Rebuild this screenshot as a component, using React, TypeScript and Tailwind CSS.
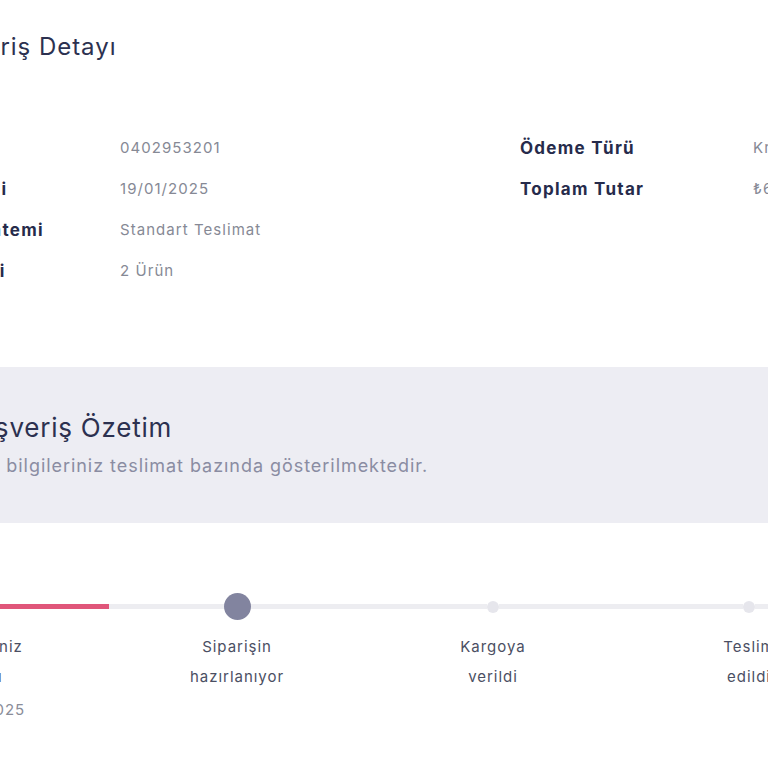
import React from "react";

const font = { fontFamily: "Inter, 'Noto Sans', sans-serif" };

function DetailRow({ label, value, lw }: { label: string; value: string; lw: string }) {
  return (
    <div className="flex h-[41px] items-center">
      <div className={`${lw} shrink-0 whitespace-nowrap text-[17px] font-bold tracking-[0.075em] text-[#262b4b]`}>{label}</div>
      <div className="whitespace-nowrap text-[15px] tracking-[0.07em] text-[#868995]">{value}</div>
    </div>
  );
}

type Step = { lines: string[]; date?: string; state: "done" | "active" | "todo"; first?: boolean; last?: boolean };

const steps: Step[] = [
  { lines: ["Siparişiniz", "alındı"], date: "19/01/2025", state: "done", first: true },
  { lines: ["Siparişin", "hazırlanıyor"], state: "active" },
  { lines: ["Kargoya", "verildi"], state: "todo" },
  { lines: ["Teslim", "edildi"], state: "todo", last: true },
];

function StepCol({ step }: { step: Step }) {
  const leftColor = step.first ? "bg-transparent" : "bg-[#ededf1]";
  const rightColor = step.last ? "bg-[#ededf1]" : step.state === "done" ? "bg-[#e0567a]" : "bg-[#ededf1]";
  return (
    <div className="flex w-[256px] shrink-0 flex-col items-center">
      <div className="flex h-[27px] w-full items-center">
        <div className={`h-[5px] flex-1 ${leftColor}`} />
        {step.state === "active" ? (
          <div className="h-[27px] w-[27px] rounded-full bg-[#82849f]" />
        ) : step.state === "done" ? (
          <div className="h-[12px] w-[12px] rounded-full bg-[#e0567a]" />
        ) : (
          <div className="h-[12px] w-[12px] rounded-full bg-[#e6e6ec]" />
        )}
        <div className={`h-[5px] flex-1 ${rightColor}`} />
      </div>
      <div className="mt-[12px] flex flex-col items-center text-center text-[15px] leading-[30px] tracking-[0.065em] text-[#4b4f63]">
        {step.lines.map((l) => (
          <div key={l} className="whitespace-nowrap">{l}</div>
        ))}
        {step.date && <div className="mt-[3px] text-[#8a8d99]">{step.date}</div>}
      </div>
    </div>
  );
}

export default function App() {
  return (
    <div className="h-[768px] w-[768px] overflow-hidden bg-white" style={font}>
      <div className="ml-[-53px] whitespace-nowrap pt-[31px] text-[24px] leading-[32px] tracking-[0.04em] text-[#2c3150]">
        Sipariş Detayı
      </div>

      <div className="ml-[-119px] mt-[65px] flex w-[1200px]">
        <div className="w-[639px] shrink-0">
          <DetailRow lw="w-[239px]" label="Sipariş No" value="0402953201" />
          <DetailRow lw="w-[239px]" label="Sipariş Tarihi" value="19/01/2025" />
          <DetailRow lw="w-[239px]" label="Teslimat Yöntemi" value="Standart Teslimat" />
          <DetailRow lw="w-[239px]" label="Ürün Bilgileri" value="2 Ürün" />
        </div>
        <div className="w-[500px] shrink-0">
          <DetailRow lw="w-[233px]" label="Ödeme Türü" value="Kredi Kartı" />
          <DetailRow lw="w-[233px]" label="Toplam Tutar" value="₺649,90" />
        </div>
      </div>

      <div className="mt-[75px] flex h-[156px] flex-col justify-center bg-[#ededf3]">
        <div className="ml-[-38px] whitespace-nowrap text-[26px] leading-[34px] tracking-[0.03em] text-[#2c3150]">
          Alışveriş Özetim
        </div>
        <div className="ml-[-45px] mt-[8px] whitespace-nowrap text-[18px] leading-[26px] tracking-[0.053em] text-[#8a8ca2]">
          Ürün bilgileriniz teslimat bazında gösterilmektedir.
        </div>
      </div>

      <div className="ml-[-147px] mt-[70px] flex w-[1200px]">
        {steps.map((s, i) => (
          <StepCol key={i} step={s} />
        ))}
      </div>
    </div>
  );
}
